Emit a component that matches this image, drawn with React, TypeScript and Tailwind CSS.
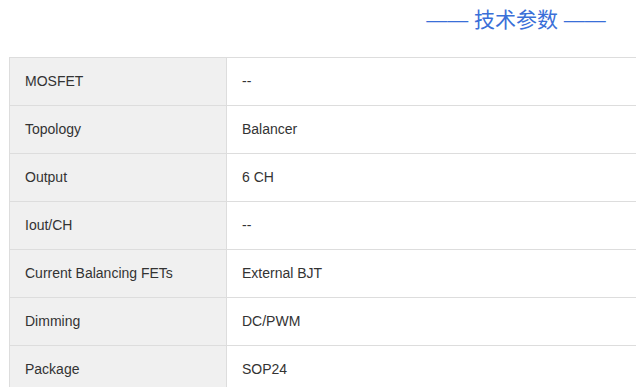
const specs: [string, string][] = [
  ["MOSFET", "--"],
  ["Topology", "Balancer"],
  ["Output", "6 CH"],
  ["Iout/CH", "--"],
  ["Current Balancing FETs", "External BJT"],
  ["Dimming", "DC/PWM"],
  ["Package", "SOP24"],
];

export default function App() {
  return (
    <div className="h-[387px] w-[636px] overflow-hidden bg-white font-['Liberation_Sans',Arial,sans-serif] text-[14px] text-[#333]">
      <div className="ml-[9px] w-[1014px]">
        <h2 className="flex h-[57px] items-start justify-center pt-[5px] text-[21px] leading-[30px] font-normal text-[#3a6fd8] font-['Liberation_Sans','Noto_Sans_CJK_SC',sans-serif]">
          —— 技术参数 ——
        </h2>
        <table className="w-full border-collapse">
          <tbody>
            {specs.map(([label, value]) => (
              <tr key={label} className="h-[48px]">
                <td className="w-[217px] border border-[#dddddd] bg-[#f0f0f0] px-[15px] align-middle">
                  {label}
                </td>
                <td className="border border-[#dddddd] bg-white px-[15px] align-middle">{value}</td>
              </tr>
            ))}
          </tbody>
        </table>
      </div>
    </div>
  );
}
